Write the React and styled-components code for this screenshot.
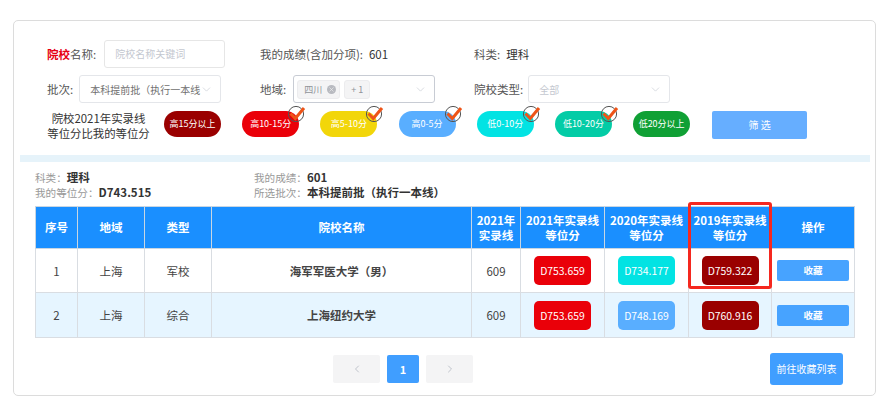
import React from "react";
import styled, { createGlobalStyle } from "styled-components";
import { ChevronDown, ChevronLeft, ChevronRight, X } from "lucide-react";

const GlobalStyle = createGlobalStyle`
  body {
    margin: 0;
    background: #fff;
    font-family: "Noto Sans CJK SC", "Liberation Sans", sans-serif;
    color: #444;
  }
`;

// --- Layout ---
const Page = styled.div`
  width: 890px;
  height: 406px;
  padding: 20px 14px 0 13px;
  box-sizing: border-box;
  overflow: hidden;
`;

const Card = styled.div`
  height: 376px;
  box-sizing: border-box;
  border: 1px solid #dcdcdc;
  border-radius: 5px;
  padding: 19px 5px 0 6px;
`;

const Filters = styled.div`
  display: flex;
  flex-direction: column;
  padding-left: 27px;
  height: 115px;
`;

const FilterRow = styled.div`
  display: grid;
  grid-template-columns: 213px 214px 1fr;
  height: 28px;
  margin-bottom: 7px;
  font-size: 11.5px;
`;

const Field = styled.div`
  display: flex;
  align-items: center;
`;

const Label = styled.span`
  color: #555;
  white-space: nowrap;
  margin-right: ${p => p.$gap || 8}px;
`;

const Strong = styled.span`
  color: #e60012;
  font-weight: 700;
`;

const Value = styled.span`
  color: #333;
`;

const TextInput = styled.div`
  width: 121px;
  height: 28px;
  box-sizing: border-box;
  border: 1px solid #e6e6e6;
  border-radius: 3px;
  padding-left: 10px;
  font-size: 10px;
  line-height: 26px;
  color: #c4c8d0;
`;

const Select = styled.div`
  width: 142px;
  height: 28px;
  box-sizing: border-box;
  display: flex;
  align-items: center;
  justify-content: space-between;
  border: 1px solid ${p => (p.$dark ? "#c8ccd4" : "#e4e6ea")};
  border-radius: 3px;
  padding: 0 7px 0 10px;
  font-size: 10px;
  color: ${p => (p.$muted ? "#c4c8d0" : "#707070")};
  white-space: nowrap;

  > svg {
    flex: none;
    color: #c4c8d0;
  }
`;

const Tags = styled.div`
  display: flex;
  gap: 4px;
  margin-left: -7px;
`;

const Tag = styled.span`
  display: flex;
  align-items: center;
  gap: 5px;
  height: 17px;
  padding: 0 ${p => (p.$plain ? 6 : 3)}px 0 6px;
  background: #f4f4f5;
  border: 1px solid #ececee;
  border-radius: 3px;
  font-size: 9px;
  color: #909399;
`;

const TagClose = styled.i`
  display: flex;
  align-items: center;
  justify-content: center;
  width: 9px;
  height: 9px;
  border-radius: 50%;
  background: #b8bac0;
  color: #f4f4f5;
`;

const PillRow = styled.div`
  display: flex;
  align-items: flex-start;
  margin-top: 1px;
`;

const PillLabel = styled.div`
  width: 103px;
  margin-right: 14px;
  text-align: center;
  font-size: 11.4px;
  line-height: 15px;
  color: #333;
  white-space: nowrap;
`;

const Pills = styled.div`
  display: flex;
  gap: 21.2px;
`;

const Pill = styled.div`
  position: relative;
  width: 57px;
  height: 26px;
  border-radius: 13px;
  background: ${p => p.$color};
  color: #fff;
  font-size: 9px;
  line-height: 26px;
  text-align: center;
  white-space: nowrap;
`;

const Tick = styled.svg`
  position: absolute;
  top: -7px;
  right: -7px;
`;

const FilterButton = styled.div`
  width: 95px;
  height: 28px;
  margin-left: 22px;
  border-radius: 2px;
  background: #66aeff;
  color: #fff;
  font-size: 10px;
  line-height: 28px;
  text-align: center;
`;

const Divider = styled.div`
  height: 7px;
  margin: 0 0 8px;
  background: #e6f3fa;
`;

const Summary = styled.div`
  display: grid;
  grid-template-columns: 219px 1fr;
  grid-auto-rows: 15px;
  align-content: start;
  padding-left: 15px;
  height: 36px;
  font-size: 10.6px;
  line-height: 15px;
  color: #999;
  white-space: nowrap;
`;

const SummaryValue = styled.span`
  font-size: 11.5px;
  font-weight: 700;
  color: #333;
`;

const TableWrap = styled.div`
  position: relative;
  margin-left: 15px;
  width: 819px;
`;

const Table = styled.table`
  width: 819px;
  table-layout: fixed;
  border-collapse: collapse;
  font-size: 11.5px;
  text-align: center;
`;

const Th = styled.th`
  height: 41px;
  padding: 0;
  background: #1a8fff;
  border: 1px solid #c9d6e2;
  color: #fff;
  font-size: 11.5px;
  font-weight: 700;
  line-height: 15px;
`;

const Tr = styled.tr`
  height: ${p => (p.$alt ? 45 : 44)}px;
  background: ${p => (p.$alt ? "#e6f5ff" : "#fff")};
`;

const Td = styled.td`
  padding: 0;
  border: 1px solid #d9dde2;
  color: #444;
  font-weight: ${p => (p.$bold ? 700 : 400)};
`;

const Score = styled.div`
  width: 57px;
  height: 29px;
  margin: 0 auto;
  border-radius: 5px;
  background: ${p => p.$color};
  color: #fff;
  font-size: 10.4px;
  line-height: 29px;
`;

const SaveButton = styled.div`
  width: 72px;
  height: 21px;
  margin: 0 auto;
  border-radius: 2px;
  background: #47a3ff;
  color: #fff;
  font-size: 9.5px;
  font-weight: 700;
  line-height: 21px;
`;

const Highlight = styled.div`
  position: absolute;
  left: 653px;
  top: -4px;
  width: 84px;
  height: 87px;
  box-sizing: border-box;
  border: 3px solid #f5281f;
  border-radius: 3px;
  pointer-events: none;
`;

const Footer = styled.div`
  display: flex;
  align-items: flex-start;
  margin-top: 15px;
  padding-left: 313px;
`;

const Pager = styled.div`
  display: flex;
  gap: 7px;
  margin-top: 2px;
`;

const PageArrow = styled.div`
  width: 47px;
  height: 28px;
  display: flex;
  align-items: center;
  justify-content: center;
  background: #f4f4f5;
  border-radius: 2px;
  color: #c0c4cc;
`;

const PageNumber = styled.div`
  width: 32px;
  height: 28px;
  background: #409eff;
  border-radius: 2px;
  color: #fff;
  font-size: 11px;
  font-weight: 700;
  line-height: 28px;
  text-align: center;
`;

const ListButton = styled.div`
  width: 73px;
  height: 32px;
  margin-left: 297px;
  border-radius: 3px;
  background: #409eff;
  color: #fff;
  font-size: 10px;
  line-height: 32px;
  text-align: center;
  white-space: nowrap;
`;

const pills = [
  { text: "高15分以上", color: "#9a0000" },
  { text: "高10-15分", color: "#ea0009", on: true },
  { text: "高5-10分", color: "#f2d60a", on: true },
  { text: "高0-5分", color: "#59aeff", on: true },
  { text: "低0-10分", color: "#02e3e3", on: true },
  { text: "低10-20分", color: "#03cca6", on: true },
  { text: "低20分以上", color: "#10a035" },
];

const columns = [
  { width: 42, title: "序号" },
  { width: 67, title: "地域" },
  { width: 67, title: "类型" },
  { width: 260, title: "院校名称" },
  { width: 49, title: ["2021年", "实录线"] },
  { width: 84, title: ["2021年实录线", "等位分"] },
  { width: 84, title: ["2020年实录线", "等位分"] },
  { width: 83, title: ["2019年实录线", "等位分"] },
  { width: 83, title: "操作" },
];

const rows = [
  {
    id: 1, area: "上海", type: "军校", name: "海军军医大学（男）", line: 609,
    scores: [["D753.659", "#ea0009"], ["D734.177", "#02e3e3"], ["D759.322", "#9a0000"]],
  },
  {
    id: 2, area: "上海", type: "综合", name: "上海纽约大学", line: 609,
    scores: [["D753.659", "#ea0009"], ["D748.169", "#59aeff"], ["D760.916", "#9a0000"]],
  },
];

function CheckMark() {
  return (
    <Tick width="20" height="20" viewBox="0 0 20 20">
      <circle cx="10" cy="10" r="7.6" fill="none" stroke="#555" strokeWidth="1" />
      <path d="M4.5 9.5 L9.3 14.5 L18 4" fill="none" stroke="#ee5418" strokeWidth="3" />
    </Tick>
  );
}

export default function App() {
  return (
    <Page>
      <GlobalStyle />
      <Card>
        <Filters>
          <FilterRow>
            <Field>
              <Label $gap={8}><Strong>院校</Strong>名称:</Label>
              <TextInput>院校名称关键词</TextInput>
            </Field>
            <Field>
              <Label $gap={6}>我的成绩(含加分项):</Label>
              <Value>601</Value>
            </Field>
            <Field>
              <Label $gap={6}>科类:</Label>
              <Value>理科</Value>
            </Field>
          </FilterRow>
          <FilterRow>
            <Field>
              <Label $gap={6}>批次:</Label>
              <Select>
                本科提前批（执行一本线
                <ChevronDown size={13} strokeWidth={1.2} />
              </Select>
            </Field>
            <Field>
              <Label $gap={7}>地域:</Label>
              <Select $dark>
                <Tags>
                  <Tag>四川<TagClose><X size={7} strokeWidth={2} /></TagClose></Tag>
                  <Tag $plain>+ 1</Tag>
                </Tags>
                <ChevronDown size={13} strokeWidth={1.2} />
              </Select>
            </Field>
            <Field>
              <Label $gap={5}>院校类型:</Label>
              <Select $muted>
                全部
                <ChevronDown size={13} strokeWidth={1.2} />
              </Select>
            </Field>
          </FilterRow>
          <PillRow>
            <PillLabel>院校2021年实录线<br />等位分比我的等位分</PillLabel>
            <Pills>
              {pills.map(p => (
                <Pill key={p.text} $color={p.color}>
                  {p.text}
                  {p.on && <CheckMark />}
                </Pill>
              ))}
            </Pills>
            <FilterButton>筛 选</FilterButton>
          </PillRow>
        </Filters>

        <Divider />

        <Summary>
          <div>科类：<SummaryValue>理科</SummaryValue></div>
          <div>我的成绩：<SummaryValue>601</SummaryValue></div>
          <div>我的等位分：<SummaryValue>D743.515</SummaryValue></div>
          <div>所选批次：<SummaryValue>本科提前批（执行一本线）</SummaryValue></div>
        </Summary>

        <TableWrap>
          <Table>
            <colgroup>
              {columns.map((c, i) => <col key={i} width={c.width} />)}
            </colgroup>
            <thead>
              <tr>
                {columns.map((c, i) => (
                  <Th key={i}>
                    {Array.isArray(c.title) ? <>{c.title[0]}<br />{c.title[1]}</> : c.title}
                  </Th>
                ))}
              </tr>
            </thead>
            <tbody>
              {rows.map((r, i) => (
                <Tr key={r.id} $alt={i === 1}>
                  <Td>{r.id}</Td>
                  <Td>{r.area}</Td>
                  <Td>{r.type}</Td>
                  <Td $bold>{r.name}</Td>
                  <Td>{r.line}</Td>
                  {r.scores.map(([text, color], j) => (
                    <Td key={j}><Score $color={color}>{text}</Score></Td>
                  ))}
                  <Td><SaveButton>收藏</SaveButton></Td>
                </Tr>
              ))}
            </tbody>
          </Table>
          <Highlight />
        </TableWrap>

        <Footer>
          <Pager>
            <PageArrow><ChevronLeft size={12} /></PageArrow>
            <PageNumber>1</PageNumber>
            <PageArrow><ChevronRight size={12} /></PageArrow>
          </Pager>
          <ListButton>前往收藏列表</ListButton>
        </Footer>
      </Card>
    </Page>
  );
}
